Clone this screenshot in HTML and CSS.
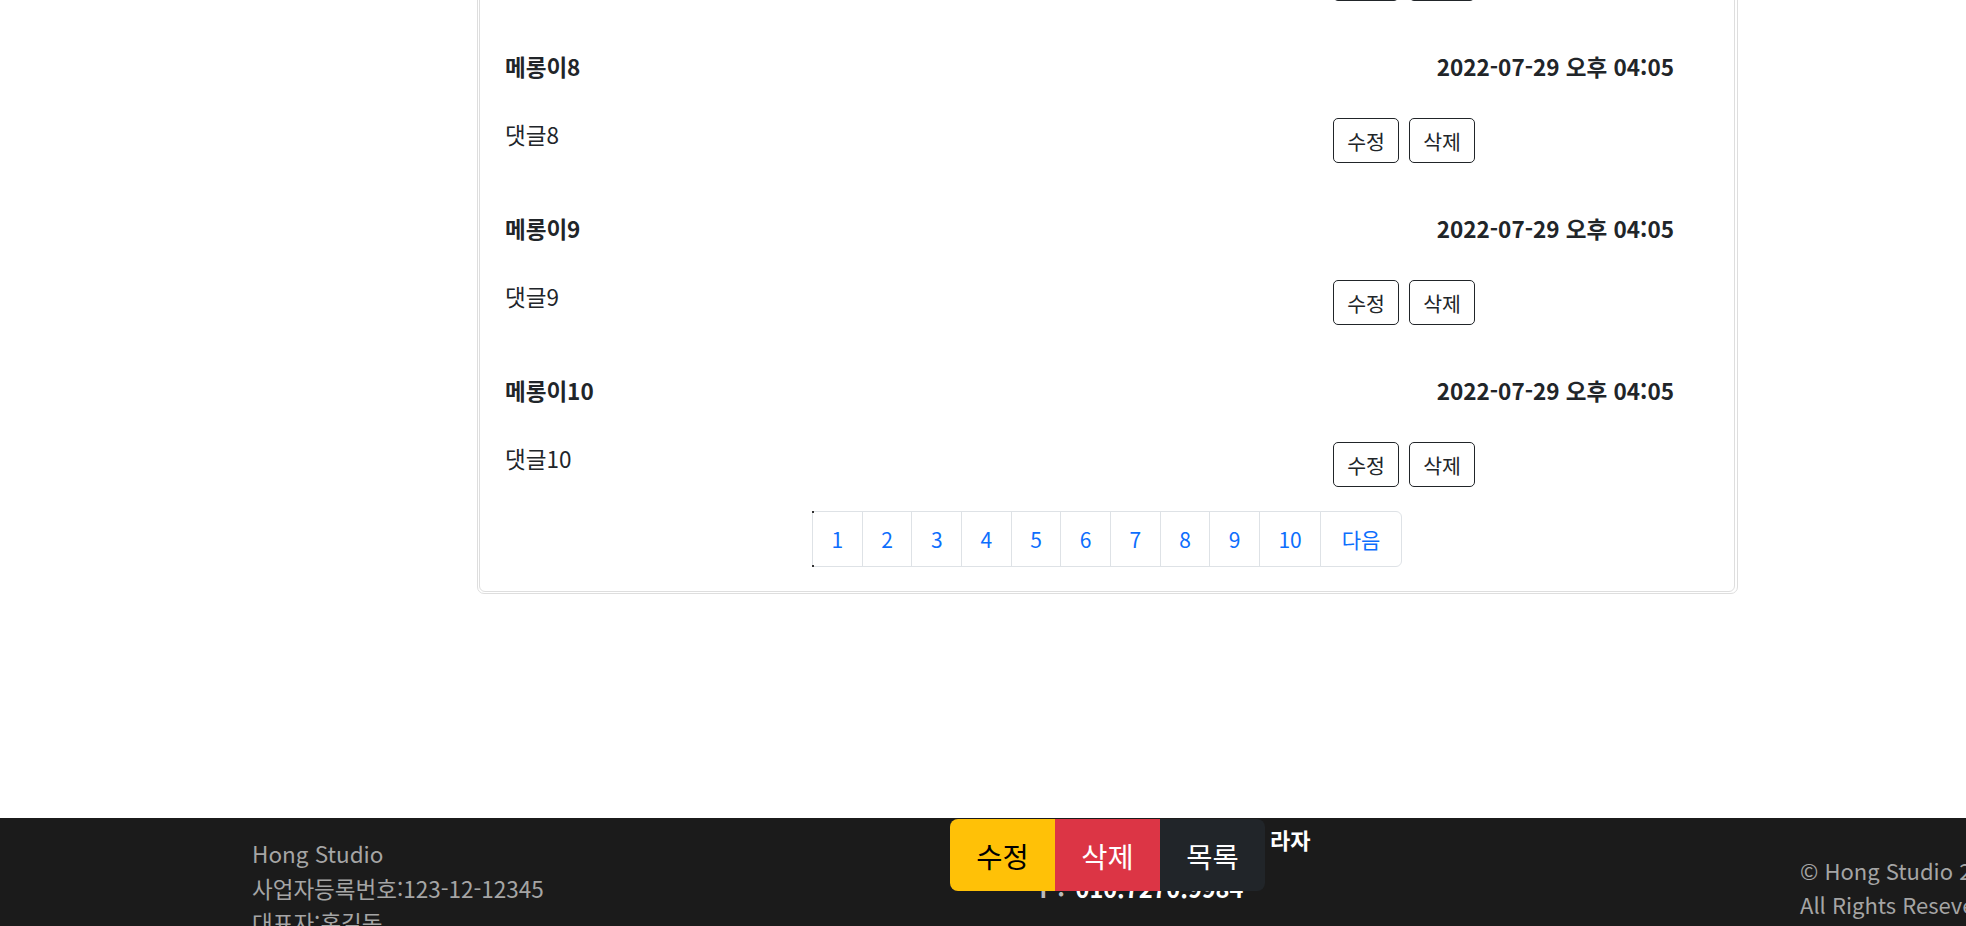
FILE: index.html
```html
<!DOCTYPE html>
<html lang="ko">
<head>
<meta charset="utf-8">
<title>댓글 목록</title>
<link rel="stylesheet" href="styles.css">
</head>
<body>
<div class="page">
  <main class="board">
    <section class="card">
      <div class="card-inner">
        <article class="comment">
          <div class="comment-head"><span class="writer">메롱이7</span><span class="date">2022-07-29 오후 04:05</span></div>
          <div class="comment-body"><p class="comment-text">댓글7</p><div class="btns"><button class="btn-o">수정</button><button class="btn-o">삭제</button></div></div>
        </article>
        <article class="comment">
          <div class="comment-head"><span class="writer">메롱이8</span><span class="date">2022-07-29 오후 04:05</span></div>
          <div class="comment-body"><p class="comment-text">댓글8</p><div class="btns"><button class="btn-o">수정</button><button class="btn-o">삭제</button></div></div>
        </article>
        <article class="comment">
          <div class="comment-head"><span class="writer">메롱이9</span><span class="date">2022-07-29 오후 04:05</span></div>
          <div class="comment-body"><p class="comment-text">댓글9</p><div class="btns"><button class="btn-o">수정</button><button class="btn-o">삭제</button></div></div>
        </article>
        <article class="comment">
          <div class="comment-head"><span class="writer">메롱이10</span><span class="date">2022-07-29 오후 04:05</span></div>
          <div class="comment-body"><p class="comment-text">댓글10</p><div class="btns"><button class="btn-o">수정</button><button class="btn-o">삭제</button></div></div>
        </article>
        <nav class="pager">
          <a class="page-link first" href="#">1</a>
          <a class="page-link" href="#">2</a>
          <a class="page-link" href="#">3</a>
          <a class="page-link" href="#">4</a>
          <a class="page-link" href="#">5</a>
          <a class="page-link" href="#">6</a>
          <a class="page-link" href="#">7</a>
          <a class="page-link" href="#">8</a>
          <a class="page-link" href="#">9</a>
          <a class="page-link" href="#">10</a>
          <a class="page-link last" href="#">다음</a>
        </nav>
      </div>
    </section>
  </main>
  <footer class="site-footer">
    <div class="footer-grid">
      <div class="f-left">
        <p>Hong Studio</p>
        <p>사업자등록번호:123-12-12345</p>
        <p>대표자:홍길동</p>
        <p>주소:서울시 강남구</p>
      </div>
      <div class="f-mid">
        <h5 class="f-title">Hong Studio 고객센터 라자</h5>
        <p class="f-phone"><span class="f-t">T :</span> 010.7270.9984</p>
      </div>
      <div class="f-right">
        <p>© Hong Studio 2022.</p>
        <p>All Rights Reseved.</p>
      </div>
    </div>
  </footer>
</div>
<div class="fixed-actions">
  <button class="act act-edit">수정</button>
  <button class="act act-del">삭제</button>
  <button class="act act-list">목록</button>
</div>
</body>
</html>
```

FILE: styles.css
```css
* { box-sizing: border-box; margin: 0; padding: 0; }

html, body {
  height: 926px;
  overflow: hidden;
}

body {
  font-family: "Noto Sans CJK KR", "Noto Sans", sans-serif;
  color: #212529;
  background: #fff;
}

.page {
  width: 2215px;
}

/* ---------- comment card ---------- */
.card {
  width: 1261px;
  margin: -164px auto 224px;
  border: 1px solid #dedede;
  border-radius: 7px;
  padding: 1px 2px 1px 1px;
}

.card-inner {
  border: 1px solid #dedede;
  border-radius: 6px;
  padding-bottom: 24px;
}

.comment {
  padding: 50px 60px 0 25px;
}

.comment-head {
  display: flex;
  justify-content: space-between;
  font-size: 22.5px;
  font-weight: 700;
  line-height: 30px;
  margin-bottom: 37px;
}

.comment-body {
  display: grid;
  grid-template-columns: 828px auto;
  font-size: 22.5px;
}

.comment-text {
  line-height: 30px;
  padding-top: 1px;
}

.btns {
  display: flex;
  gap: 10px;
}

.btn-o {
  width: 66px;
  height: 45px;
  display: inline-flex;
  align-items: center;
  justify-content: center;
  border: 1px solid #212529;
  border-radius: 5px;
  background: #fff;
  color: #212529;
  font-family: inherit;
  font-size: 20.5px;
}

/* ---------- pagination ---------- */
.pager {
  display: flex;
  justify-content: center;
  margin-top: 24px;
}

.page-link {
  display: block;
  padding: 12px 18.5px;
  margin-left: -1px;
  font-size: 21px;
  line-height: 30px;
  color: #0d6efd;
  text-decoration: none;
  border: 1px solid #dee2e6;
  background: #fff;
}

.page-link.first {
  position: relative;
  margin-left: 0;
}

.page-link.first::before,
.page-link.first::after {
  content: "";
  position: absolute;
  left: -1px;
  width: 2px;
  height: 2px;
  background: #333;
}

.page-link.first::before { top: -1px; }
.page-link.first::after { bottom: -1px; }

.page-link.last {
  padding: 12px 20.5px;
  border-radius: 0 6px 6px 0;
}

/* ---------- footer ---------- */
.site-footer {
  background: #1b1b1b;
  height: 220px;
  padding-left: 252px;
}

.footer-grid {
  display: grid;
  grid-template-columns: 784px 764px auto;
}

.f-left {
  padding-top: 18px;
  font-size: 22.5px;
  line-height: 34.5px;
  color: #a5a5a5;
  white-space: nowrap;
}

.f-mid {
  padding-top: 6px;
  color: #fff;
  white-space: nowrap;
}

.f-title {
  margin-left: 6px;
  font-size: 22px;
  font-weight: 700;
  line-height: 30px;
}

.f-phone {
  margin-top: 19px;
  font-size: 23.5px;
  line-height: 30px;
  font-weight: 700;
}

.f-t {
  color: #bbb;
  margin-right: 4px;
}

.f-right {
  padding-top: 35px;
  font-size: 22px;
  line-height: 34px;
  color: #a5a5a5;
  white-space: nowrap;
}

/* ---------- floating action bar ---------- */
.fixed-actions {
  position: fixed;
  left: 950px;
  bottom: 35px;
  display: flex;
  border-radius: 8px;
  overflow: hidden;
}

.act {
  width: 105px;
  height: 72px;
  border: 0;
  font-family: inherit;
  font-size: 28.5px;
  display: flex;
  align-items: center;
  justify-content: center;
}

.act-edit { background: #ffc107; color: #000; }
.act-del { background: #dc3545; color: #fff; }
.act-list { background: #212529; color: #fff; }
```
